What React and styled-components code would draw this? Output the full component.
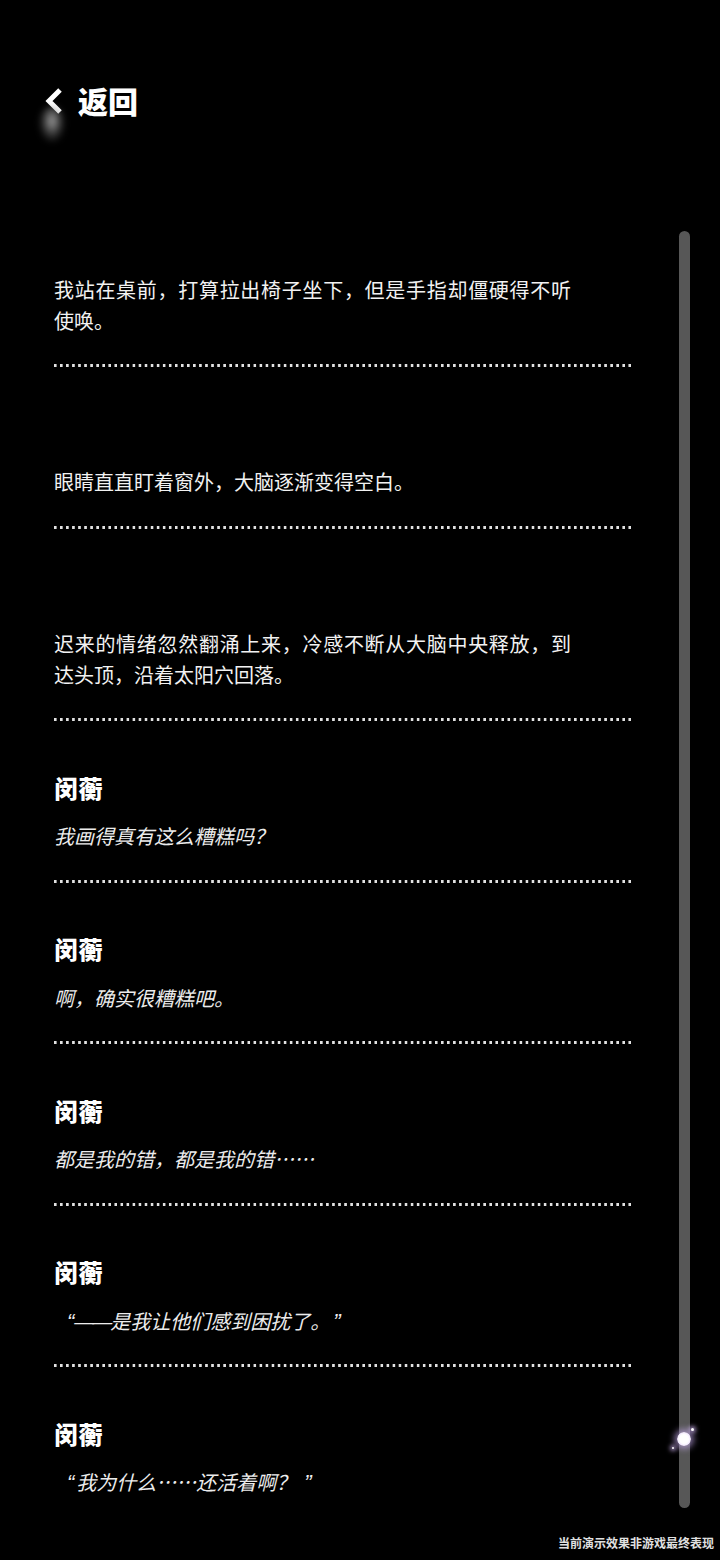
import React from "react";
import styled, { createGlobalStyle } from "styled-components";

const Global = createGlobalStyle`
  html, body { margin: 0; padding: 0; background: #000; }
  body { font-family: "Noto Sans CJK SC", "Noto Sans", sans-serif; color: #f0f0f0; }
`;

const Page = styled.div`
  position: relative;
  width: 720px;
  height: 1560px;
  overflow: hidden;
  background: #000;
  display: flex;
  flex-direction: column;
`;

const Header = styled.div`
  height: 223px;
  box-sizing: border-box;
  padding: 77px 0 0 43px;
  display: flex;
  align-items: flex-start;
  gap: 14px;
`;

const BackText = styled.span`
  font-size: 30px;
  line-height: 46px;
  font-weight: 900;
  color: #fff;
`;

const Chevron = styled.svg`
  margin-top: 11px;
  width: 21px;
  height: 26px;
`;

// blurred finger-smudge under the back arrow
const Smudge = styled.div`
  position: absolute;
  left: 39px;
  top: 106px;
  width: 26px;
  height: 36px;
  border-radius: 50%;
  background: radial-gradient(ellipse at 50% 42%, rgba(200, 200, 200, 0.8), rgba(120, 120, 120, 0.35) 50%, rgba(0, 0, 0, 0) 78%);
  filter: blur(3px);
`;

const Body = styled.div`
  height: 1287px;
  overflow: hidden;
  display: flex;
`;

const Column = styled.div`
  width: 578px;
  margin-left: 54px;
`;

const Item = styled.div`
  & + & { margin-top: 48.5px; }
`;

const Name = styled.div`
  height: 40px;
  line-height: 40px;
  font-size: 24px;
  font-weight: 900;
  color: #fff;
  letter-spacing: 0.5px;
  transform: translateY(-2px);
`;

const Text = styled.p`
  margin: 10.5px 0 0;
  width: ${p => (p.$italic ? "578px" : "517px")};
  font-size: 20px;
  line-height: 31px;
  text-align: justify;
  color: ${p => (p.$italic ? "#ececec" : "#f2f2f2")};
  font-style: ${p => (p.$italic ? "italic" : "normal")};
  text-indent: ${p => (p.$quoted ? "13px" : "0")};
`;

const Latin = styled.span`
  font-family: "Liberation Sans", sans-serif;
  font-size: ${p => (p.$dash ? "20px" : "22px")};
  line-height: 0;
  letter-spacing: ${p => (p.$dash ? "-2px" : "0")};
  margin-left: ${p => p.$ml || 0}px;
  margin-right: ${p => p.$mr || 0}px;
`;

const Dots = styled.div`
  margin-top: 28.5px;
  height: 3px;
  background-image: linear-gradient(to right, #e2e2e2 0 2.7px, transparent 2.7px);
  background-size: 6.05px 3px;
  background-repeat: repeat-x;
`;

const Rail = styled.div`
  position: relative;
  margin: 8px 0 0 47px;
  width: 11px;
  height: 1277px;
  border-radius: 6px;
  background: #575757;
`;

const Orb = styled.div`
  position: absolute;
  left: -2px;
  top: 1201px;
  width: 14px;
  height: 14px;
  border-radius: 50%;
  background: radial-gradient(circle, #fff 45%, #f3e9ff 65%, rgba(220, 190, 255, 0) 100%);
  box-shadow: 0 0 6px 3px rgba(210, 180, 255, 0.6);
`;

const Sparkle = styled.div`
  position: absolute;
  width: ${p => p.$size}px;
  height: ${p => p.$size}px;
  border-radius: 50%;
  background: #fff;
  box-shadow: 0 0 4px 2px rgba(220, 190, 255, 0.7);
  left: ${p => p.$x}px;
  top: ${p => p.$y}px;
`;

const Footer = styled.div`
  padding: 26px 6px 0 0;
  text-align: right;
  font-size: 12px;
  line-height: 14px;
  font-weight: 700;
  color: #e0e0e0;
`;

const entries = [
  { text: "我站在桌前，打算拉出椅子坐下，但是手指却僵硬得不听使唤。" },
  { text: "眼睛直直盯着窗外，大脑逐渐变得空白。" },
  { text: "迟来的情绪忽然翻涌上来，冷感不断从大脑中央释放，到达头顶，沿着太阳穴回落。" },
  { name: "闵蘅", text: "我画得真有这么糟糕吗？" },
  { name: "闵蘅", text: "啊，确实很糟糕吧。" },
  { name: "闵蘅", text: "都是我的错，都是我的错……" },
  { name: "闵蘅", dash: true, text: "是我让他们感到困扰了。" },
  { name: "闵蘅", text: "我为什么……还活着啊？", quoted: true },
];

function Line({ e }) {
  if (e.dash) {
    return (
      <Text $italic $quoted>
        <Latin>“</Latin><Latin $dash>——</Latin>{e.text}<Latin $ml={13}>”</Latin>
      </Text>
    );
  }
  if (e.quoted) {
    return (
      <Text $italic $quoted>
        <Latin $mr={2}>“</Latin>{e.text}<Latin $ml={8}>”</Latin>
      </Text>
    );
  }
  return <Text $italic={!!e.name}>{e.text}</Text>;
}

export default function App() {
  return (
    <Page>
      <Global />
      <Header>
        <Chevron viewBox="0 0 21 26">
          <path d="M17 2 L6 13 L17 24" fill="none" stroke="#fff" strokeWidth="5" strokeLinejoin="miter" />
        </Chevron>
        <BackText>返回</BackText>
      </Header>
      <Smudge />
      <Body>
        <Column>
          {entries.map((e, i) => (
            <Item key={i}>
              <Name>{e.name || ""}</Name>
              <Line e={e} />
              <Dots />
            </Item>
          ))}
        </Column>
        <Rail>
          <Orb />
          <Sparkle $size={3} $x={12} $y={1197} />
          <Sparkle $size={2} $x={-7} $y={1216} />
        </Rail>
      </Body>
      <Footer>当前演示效果非游戏最终表现</Footer>
    </Page>
  );
}
